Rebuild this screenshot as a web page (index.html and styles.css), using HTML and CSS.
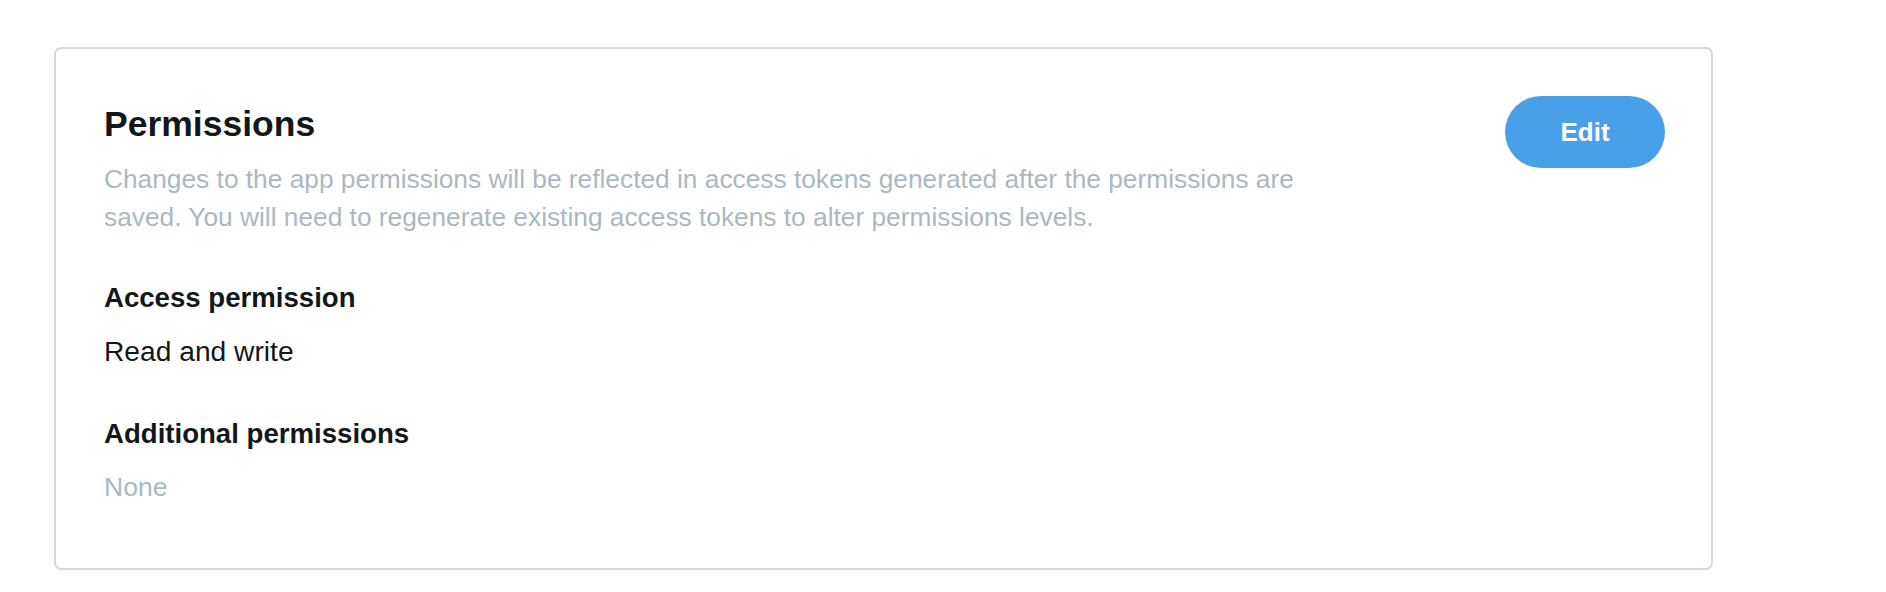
FILE: index.html
```html
<!DOCTYPE html>
<html>
<head>
<meta charset="utf-8">
<link rel="stylesheet" href="styles.css">
</head>
<body>
<main class="page">
  <section class="card">
    <div class="card-header">
      <div class="card-intro">
        <h2 class="card-title">Permissions</h2>
        <p class="card-desc">Changes to the app permissions will be reflected in access tokens generated after the permissions are saved. You will need to regenerate existing access tokens to alter permissions levels.</p>
      </div>
      <button class="btn-edit" type="button">Edit</button>
    </div>
    <div class="field field-first">
      <h3 class="field-label">Access permission</h3>
      <p class="field-value">Read and write</p>
    </div>
    <div class="field">
      <h3 class="field-label">Additional permissions</h3>
      <p class="field-value muted">None</p>
    </div>
  </section>
</main>
</body>
</html>
```
FILE: styles.css
```css
html, body {
  margin: 0;
  padding: 0;
  background: #ffffff;
}
body {
  font-family: "Liberation Sans", Arial, Helvetica, sans-serif;
  color: #14171a;
}
.page {
  padding: 47px 173px 22px 54px;
}
.card {
  border: 2px solid #d3dae0;
  border-radius: 7px;
  padding: 47px 46px 62px 48px;
}
.card-header {
  display: flex;
  justify-content: space-between;
  align-items: flex-start;
}
.card-intro {
  flex: 0 1 1210px;
}
.card-title {
  margin: 0;
  font-size: 35.5px;
  line-height: 56px;
  font-weight: 700;
  color: #14171a;
}
.card-desc {
  margin: 8px 0 0;
  font-size: 26.3px;
  line-height: 38px;
  color: #aab8c2;
}
.btn-edit {
  flex: none;
  width: 160px;
  height: 72px;
  border: none;
  border-radius: 36px;
  background: #4aa0e8;
  color: #ffffff;
  font-family: "Liberation Sans", Arial, sans-serif;
  font-size: 26px;
  font-weight: 700;
  padding: 0;
}
.field {
  margin-top: 45px;
}
.field-first {
  margin-top: 43px;
}
.field-label {
  margin: 0;
  font-size: 27.6px;
  line-height: 38px;
  font-weight: 700;
  color: #14171a;
}
.field-value {
  margin: 15px 0 0;
  font-size: 28.2px;
  line-height: 38px;
  color: #14171a;
}
.field-value.muted {
  font-size: 26.6px;
  color: #aab8c2;
}
```
